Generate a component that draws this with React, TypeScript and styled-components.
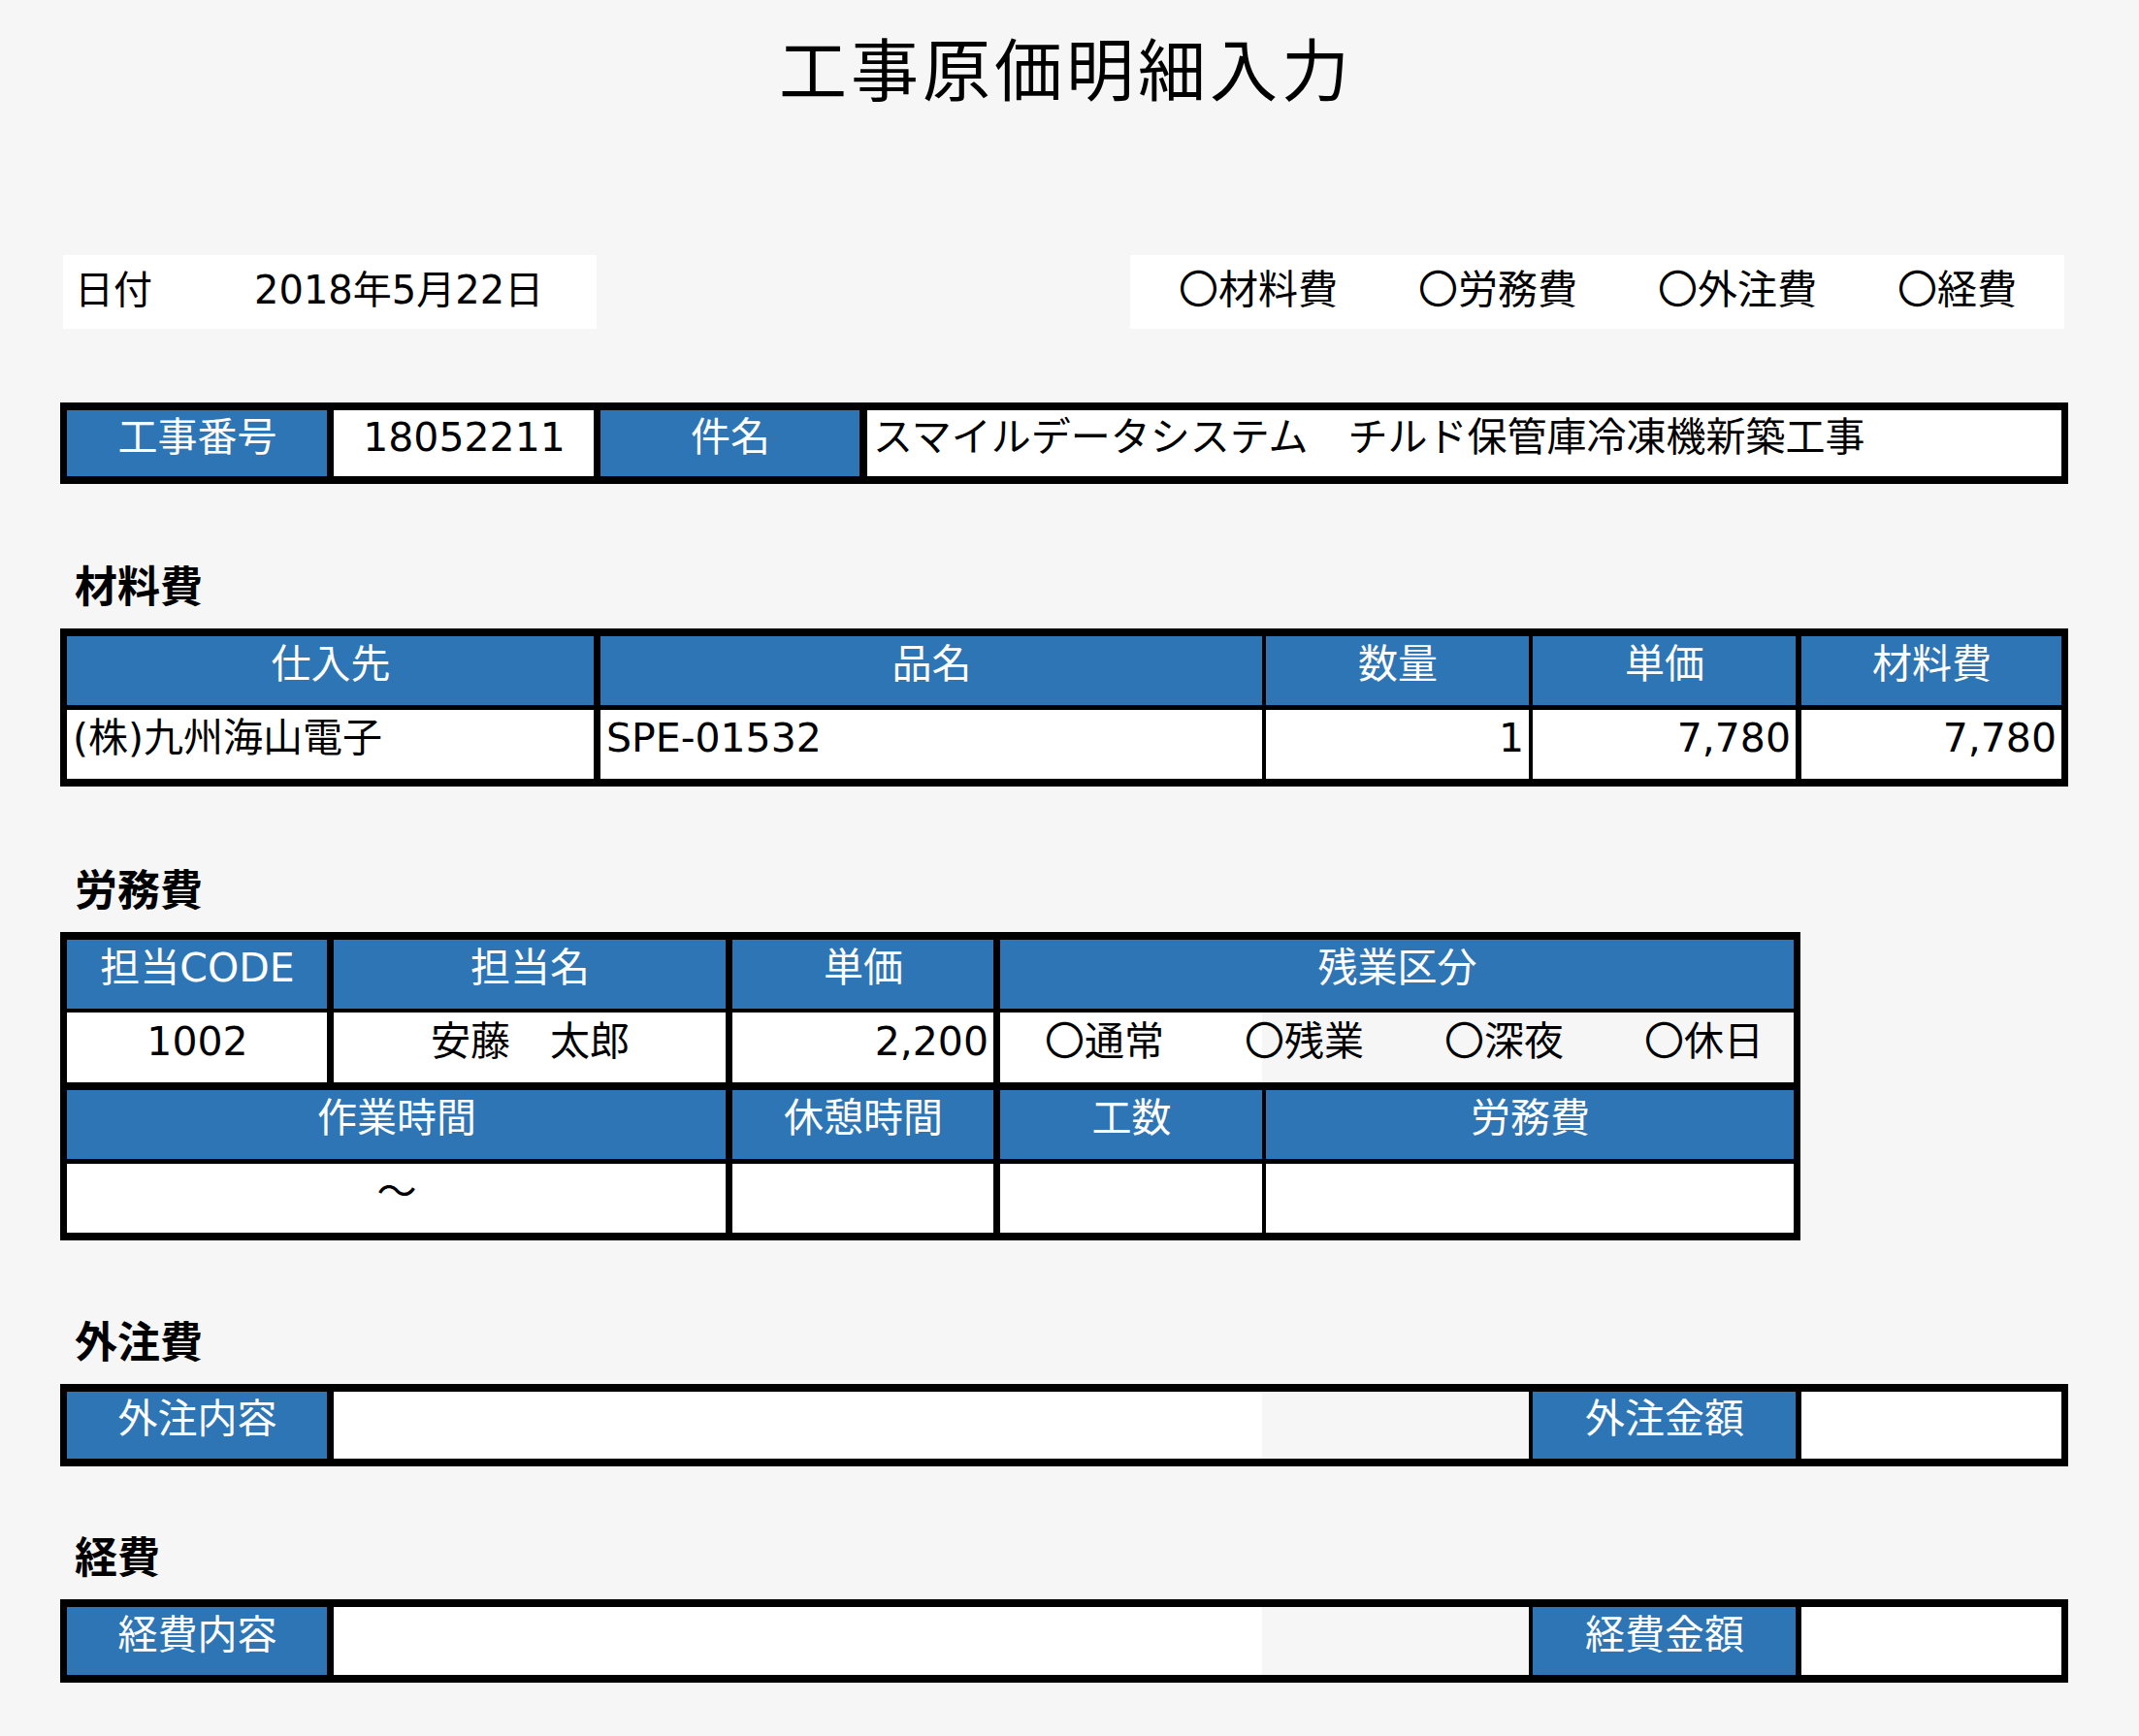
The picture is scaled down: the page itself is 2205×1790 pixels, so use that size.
import React from 'react';
import styled, { createGlobalStyle } from 'styled-components';

const GlobalStyle = createGlobalStyle`
  html, body {
    margin: 0;
    padding: 0;
    background: #f6f6f6;
  }
  body {
    font-family: "DejaVu Sans", "Noto Sans CJK JP", sans-serif;
    color: #000;
  }
`;

const BLUE = '#2e75b6';
const PAGE_BG = '#f6f6f6';

const Page = styled.div`
  width: 2205px;
  height: 1790px;
  box-sizing: border-box;
  padding: 34px 73px 0 62px;
  overflow: hidden;
`;

const Title = styled.h1`
  margin: 0;
  padding-left: 4px;
  font-family: "Noto Sans CJK JP", sans-serif;
  font-weight: 400;
  font-size: 70px;
  line-height: 70px;
  letter-spacing: 4px;
  text-align: center;
`;

const TopRow = styled.div`
  display: flex;
  justify-content: space-between;
  margin: 159px 4px 0 3px;
`;

const DateBox = styled.div`
  width: 550px;
  height: 76px;
  box-sizing: border-box;
  padding: 0 0 4px 12px;
  background: #fff;
  display: flex;
  align-items: center;
  font-size: 40px;
  line-height: 40px;
`;

const DateLabel = styled.span`
  width: 185px;
`;

const TypeBox = styled.div`
  width: 963px;
  height: 76px;
  box-sizing: border-box;
  padding: 0 0 4px 50px;
  background: #fff;
  display: grid;
  grid-template-columns: repeat(3, 247px) auto;
  align-items: center;
  font-size: 41px;
  line-height: 41px;
`;

const Heading = styled.h2<{ $top: number }>`
  margin: ${p => p.$top}px 0 24px;
  padding-left: 15px;
  font-family: "Noto Sans CJK JP", sans-serif;
  font-weight: 700;
  font-size: 44px;
  line-height: 44px;
`;

const Sheet = styled.div<{ $cols: string; $top?: number; $width?: number }>`
  display: grid;
  grid-template-columns: ${p => p.$cols};
  width: ${p => (p.$width ? `${p.$width}px` : 'auto')};
  margin-top: ${p => p.$top ?? 0}px;
  box-sizing: border-box;
  padding: 8px 7px;
  background: #000;
`;

type Tone = 'head' | 'data' | 'blank';
type Align = 'left' | 'center' | 'right';

const justify = { left: 'flex-start', center: 'center', right: 'flex-end' };

const Cell = styled.div<{
  $tone?: Tone;
  $align?: Align;
  $bl?: number;
  $bt?: number;
  $span?: number;
  $h: number;
}>`
  grid-column: span ${p => p.$span ?? 1};
  height: ${p => p.$h + (p.$bt ?? 0)}px;
  box-sizing: border-box;
  border-left: ${p => p.$bl ?? 0}px solid #000;
  border-top: ${p => p.$bt ?? 0}px solid #000;
  background: ${p => (p.$tone === 'head' ? BLUE : p.$tone === 'blank' ? PAGE_BG : '#fff')};
  color: ${p => (p.$tone === 'head' ? '#fff' : '#000')};
  display: flex;
  align-items: center;
  justify-content: ${p => justify[p.$align ?? 'center']};
  padding: 0 5px 12px 6px;
  font-size: 41px;
  line-height: 41px;
  white-space: nowrap;
  overflow: hidden;
`;

const OvertimeCell = styled(Cell)`
  display: grid;
  grid-template-columns: repeat(4, 206px);
  justify-content: start;
  padding-left: 46px;
  background: linear-gradient(to right, #fff 0, #fff 270px, ${PAGE_BG} 270px);
`;

const Tilde = styled.span`
  font-family: "Noto Sans CJK JP", sans-serif;
  margin-top: -8px;
`;

const FULL = 2070;

export default function App() {
  return (
    <>
      <GlobalStyle />
      <Page>
        <Title>工事原価明細入力</Title>

        <TopRow>
          <DateBox>
            <DateLabel>日付</DateLabel>
            <span>2018年5月22日</span>
          </DateBox>
          <TypeBox>
            <span>〇材料費</span>
            <span>〇労務費</span>
            <span>〇外注費</span>
            <span>〇経費</span>
          </TypeBox>
        </TopRow>

        <Sheet $top={76} $width={FULL} $cols="268px 275px 274px 1fr">
          <Cell $h={68} $tone="head">工事番号</Cell>
          <Cell $h={68} $bl={7}>18052211</Cell>
          <Cell $h={68} $bl={7} $tone="head">件名</Cell>
          <Cell $h={68} $bl={8} $align="left">スマイルデータシステム　チルド保管庫冷凍機新築工事</Cell>
        </Sheet>

        <Heading $top={81}>材料費</Heading>
        <Sheet $width={FULL} $cols="543px 689px 275px 275px 1fr">
          <Cell $h={71} $tone="head">仕入先</Cell>
          <Cell $h={71} $bl={7} $tone="head">品名</Cell>
          <Cell $h={71} $bl={4} $tone="head">数量</Cell>
          <Cell $h={71} $bl={4} $tone="head">単価</Cell>
          <Cell $h={71} $bl={6} $tone="head">材料費</Cell>

          <Cell $h={71} $bt={5} $align="left">(株)九州海山電子</Cell>
          <Cell $h={71} $bt={5} $bl={7} $align="left">SPE-01532</Cell>
          <Cell $h={71} $bt={5} $bl={4} $align="right">1</Cell>
          <Cell $h={71} $bt={5} $bl={4} $align="right">7,780</Cell>
          <Cell $h={71} $bt={5} $bl={6} $align="right">7,780</Cell>
        </Sheet>

        <Heading $top={82}>労務費</Heading>
        <Sheet $width={1794} $cols="268px 411px 276px 277px 1fr">
          <Cell $h={71} $tone="head">担当CODE</Cell>
          <Cell $h={71} $bl={7} $tone="head">担当名</Cell>
          <Cell $h={71} $bl={7} $tone="head">単価</Cell>
          <Cell $h={71} $bl={7} $span={2} $tone="head">残業区分</Cell>

          <Cell $h={72} $bt={4}>1002</Cell>
          <Cell $h={72} $bt={4} $bl={7}>安藤　太郎</Cell>
          <Cell $h={72} $bt={4} $bl={7} $align="right">2,200</Cell>
          <OvertimeCell $h={72} $bt={4} $bl={7} $span={2}>
            <span>〇通常</span>
            <span>〇残業</span>
            <span>〇深夜</span>
            <span>〇休日</span>
          </OvertimeCell>

          <Cell $h={71} $bt={8} $span={2} $tone="head">作業時間</Cell>
          <Cell $h={71} $bt={8} $bl={7} $tone="head">休憩時間</Cell>
          <Cell $h={71} $bt={8} $bl={7} $tone="head">工数</Cell>
          <Cell $h={71} $bt={8} $bl={4} $tone="head">労務費</Cell>

          <Cell $h={71} $bt={5} $span={2}><Tilde>～</Tilde></Cell>
          <Cell $h={71} $bt={5} $bl={7} />
          <Cell $h={71} $bt={5} $bl={7} />
          <Cell $h={71} $bt={5} $bl={4} />
        </Sheet>

        <Heading $top={80}>外注費</Heading>
        <Sheet $width={FULL} $cols="268px 964px 275px 275px 1fr">
          <Cell $h={69} $tone="head">外注内容</Cell>
          <Cell $h={69} $bl={7} />
          <Cell $h={69} $tone="blank" />
          <Cell $h={69} $bl={4} $tone="head">外注金額</Cell>
          <Cell $h={69} $bl={6} />
        </Sheet>

        <Heading $top={69}>経費</Heading>
        <Sheet $width={FULL} $cols="268px 964px 275px 275px 1fr">
          <Cell $h={70} $tone="head">経費内容</Cell>
          <Cell $h={70} $bl={7} />
          <Cell $h={70} $tone="blank" />
          <Cell $h={70} $bl={4} $tone="head">経費金額</Cell>
          <Cell $h={70} $bl={6} />
        </Sheet>
      </Page>
    </>
  );
}
